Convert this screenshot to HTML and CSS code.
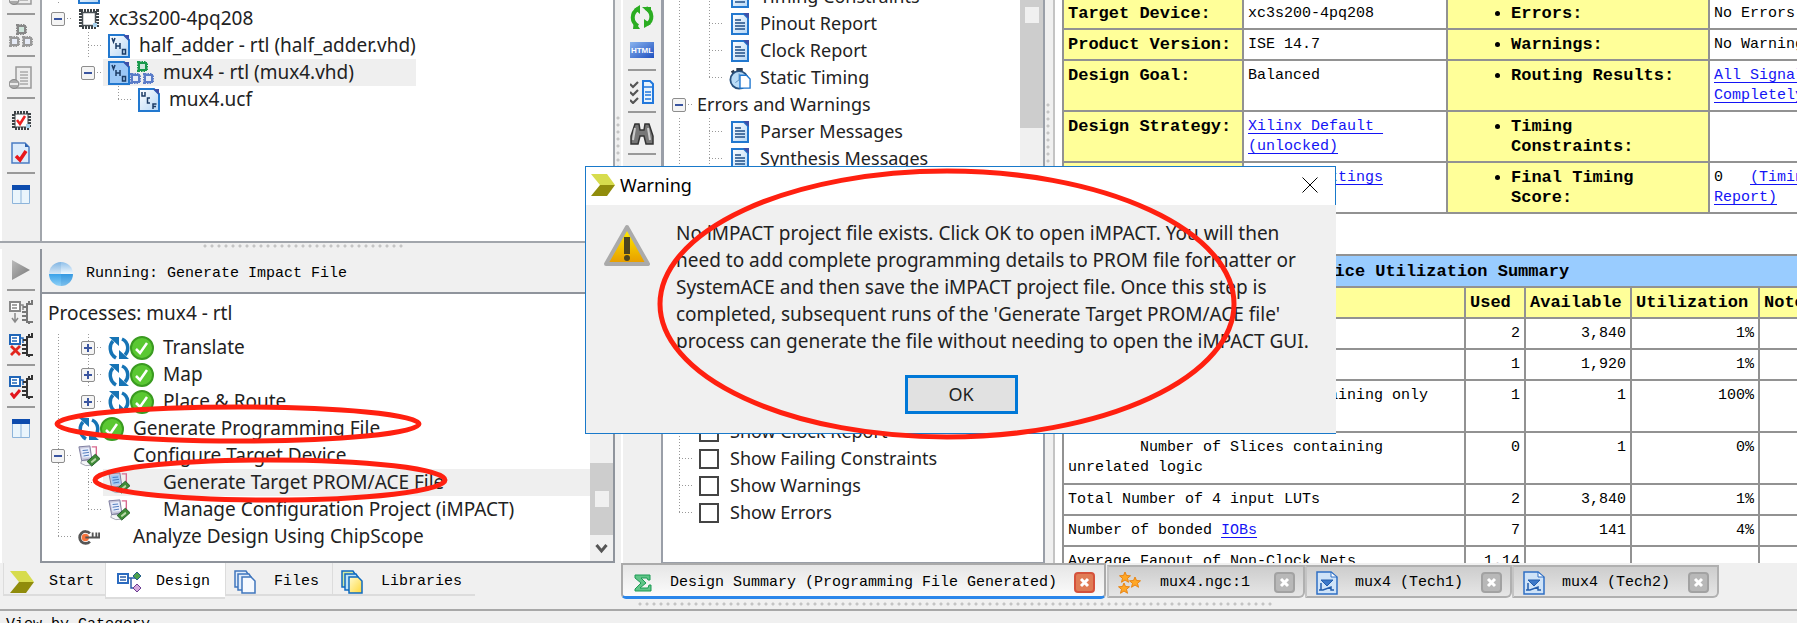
FILE: index.html
```html
<!DOCTYPE html>
<html lang="en">
<head>
<meta charset="utf-8">
<title>ISE Project Navigator</title>
<link rel="stylesheet" href="styles.css">
</head>
<body>
<svg class="defs" aria-hidden="true">
  <defs>
    <linearGradient id="blueDoc" x1="0" y1="0" x2="1" y2="1"><stop offset="0" stop-color="#fff"/><stop offset="1" stop-color="#b5d6f5"/></linearGradient>
    <linearGradient id="globe" x1="0" y1="0" x2="0" y2="1"><stop offset="0" stop-color="#8fc0ea"/><stop offset=".5" stop-color="#f2f9fe"/><stop offset=".52" stop-color="#3da4ea"/><stop offset="1" stop-color="#8fd0f6"/></linearGradient>
    <linearGradient id="warn" x1="0" y1="0" x2="0" y2="1"><stop offset="0" stop-color="#fff200"/><stop offset="1" stop-color="#e79a00"/></linearGradient>
    <linearGradient id="yellowDoc" x1="0" y1="0" x2="1" y2="1"><stop offset="0" stop-color="#fffbd0"/><stop offset="1" stop-color="#ffd83a"/></linearGradient>
    <linearGradient id="htmlBlue" x1="0" y1="0" x2="1" y2="1"><stop offset="0" stop-color="#8ab4ee"/><stop offset="1" stop-color="#1f50c0"/></linearGradient>
    <linearGradient id="playGray" x1="0" y1="0" x2="1" y2="1"><stop offset="0" stop-color="#bbb"/><stop offset="1" stop-color="#777"/></linearGradient>
    <symbol id="chip" viewBox="0 0 22 22"><rect x="3" y="3" width="16" height="16" fill="none" stroke="#3c4246" stroke-width="4" stroke-dasharray="2 1"/><rect x="4.500" y="4.500" width="13" height="13" fill="#fff" stroke="#4a5156" stroke-width="1.500"/><path d="M15 15h4v4h-4z" fill="#a9d3ee"/></symbol>
    <symbol id="page" viewBox="0 0 22 24"><path d="M1 1h15l5 5v17H1z" style="fill:var(--doc,url(#blueDoc))" stroke="#2278cf" stroke-width="2"/><path d="M15 1h6v6z" fill="#3d4fa8"/></symbol>
    <symbol id="vhd" viewBox="0 0 22 24"><use href="#page"/><path d="M4 4l1.500 4L7 4M8 9v6M12 9v6M8 12h4M14.500 15.500v4.500h3v-4.500z" fill="none" stroke="#1c3c66" stroke-width="1.500"/></symbol>
    <symbol id="ucf" viewBox="0 0 22 24"><use href="#page"/><path d="M4 4v4h3V4M12 10H9.500v5H12M15 21v-5h3.500M15 18.500h3" fill="none" stroke="#1c3c66" stroke-width="1.500"/></symbol>
    <symbol id="report" viewBox="0 0 22 24"><path d="M3 2h12l4 4v16H3z" fill="url(#blueDoc)" stroke="#2278cf" stroke-width="2"/><path d="M14 1h6v6z" fill="#3d4fa8"/><path d="M6 8h6M6 11h10M6 14h10M6 17h10" stroke="#1f4f86" stroke-width="1.500"/></symbol>
    <symbol id="blocks" viewBox="0 0 24 24"><g fill="none" stroke-width="4" stroke-dasharray="1.500 1"><rect x="9" y="2" width="7" height="7" stroke="var(--top,#17994a)"/><rect x="2" y="14" width="7" height="7" stroke="var(--low,#5a7cc8)"/><rect x="15" y="14" width="7" height="7" stroke="var(--low,#5a7cc8)"/></g><g fill="#cfe6dc" stroke-width="2"><rect x="9" y="2" width="7" height="7" stroke="var(--top,#17994a)"/><rect x="2" y="14" width="7" height="7" fill="#e6ebf7" stroke="var(--low,#5a7cc8)"/><rect x="15" y="14" width="7" height="7" fill="#e6ebf7" stroke="var(--low,#5a7cc8)"/></g></symbol>
    <symbol id="cycle" viewBox="0 0 22 24"><path d="M8 22C1 18 1 9 5 5M14 3c7 3 7 12 3 16" fill="none" stroke="#1674b5" stroke-width="3.500"/><path d="M1 1h10v9zM21 23H11v-9z" fill="#1674b5"/></symbol>
    <symbol id="ok" viewBox="0 0 24 24"><circle cx="12" cy="12" r="11" fill="#5ac832" stroke="#3a9b20" stroke-width="2"/><path d="M6 13l4 4 7-10" fill="none" stroke="#fff" stroke-width="2.500"/></symbol>
    <symbol id="config" viewBox="0 0 24 24"><path d="M3 20q5 4 12 2l-1-5H4z" fill="#f5f5f8" stroke="#9fa1ad"/><path d="M1 2l12-1 2 14-11 2z" fill="#c9c9dd" stroke="#77779a"/><path d="M3 4l9-1 2 10-9 1z" style="fill:var(--doc,#e9eefc)"/><path d="M5 6l6-.5M5 9l7-1M6 12l6-1" stroke="#4472b8"/><path d="M15 2h5v10" fill="none" stroke="#d8688e" stroke-width="1.500"/><path d="M10 18l9-8 5 5-9 8z" fill="#3f8b37" stroke="#1d5a24"/><path d="M14 18l5-4 1 2-5 4z" fill="#b9d8a9"/></symbol>
    <symbol id="scope" viewBox="0 0 24 24"><path d="M13 8A6.500 6.500 0 1 0 13 17" fill="none" stroke="#555" stroke-width="3"/><circle cx="8" cy="12.500" r="4" fill="#f6733c"/><path d="M8 12.500h16M16 12V7M20 12V7M23 12V7" stroke="#555" stroke-width="2"/></symbol>
    <symbol id="timing" viewBox="0 0 24 24"><path d="M8 1h7v4H8zM2 5l3-2 2 3-3 2z" fill="#2e3c4f"/><circle cx="11" cy="14" r="9.500" fill="#b9dbf6" stroke="#28517f" stroke-width="2"/><path d="M11 7v7l-4 3" stroke="#5a8ab8" fill="none"/><path d="M12 9h7l4 4v10H12z" fill="#fff" stroke="#2278cf" stroke-width="1.500"/></symbol>
    <symbol id="graydoc" viewBox="0 0 24 24"><path d="M7 1h15v21H7z" fill="#ededed" stroke="#999" stroke-width="1.500"/><path d="M11 6h8M11 9h8M11 12h8M11 15h8M11 18h8" stroke="#888"/><ellipse cx="5" cy="18" rx="5" ry="4.500" fill="#aaa" stroke="#888"/><path d="M1 18h8" stroke="#fff" stroke-width="1.500"/></symbol>
    <symbol id="chipcheck" viewBox="0 0 24 24"><rect x="5" y="5" width="15" height="15" fill="none" stroke="#3c4246" stroke-width="4" stroke-dasharray="2 1"/><rect x="6" y="6" width="13" height="13" fill="#fff" stroke="#3c4246"/><path d="M8 12l3 4 5-8" fill="none" stroke="#e22" stroke-width="2.500"/><path d="M17 16h4v4h-4z" fill="#a9d3ee"/></symbol>
    <symbol id="doccheck" viewBox="0 0 24 24"><path d="M3 2h13l4 4v16H3z" fill="#dcebfb" stroke="#4a7cc4" stroke-width="1.500"/><path d="M16 2v4h4z" fill="#2b62b0"/><path d="M7 15l4 4 6-9" fill="none" stroke="#e8161c" stroke-width="3.500"/></symbol>
    <symbol id="layout" viewBox="0 0 24 24"><path d="M3.500 6v14.500h17V6M12 6v14" fill="#eaf5fc" stroke="#8db4da"/><path d="M3 2h18v5H3z" fill="#0d4cae"/></symbol>
    <symbol id="play" viewBox="0 0 24 24"><path d="M3 2l18 10L3 22z" fill="url(#playGray)"/></symbol>
    <symbol id="flow" viewBox="0 0 24 24"><path d="M1 2h10v9H1z" fill="#fff" stroke="var(--c,#888)" stroke-width="2"/><path d="M3 5h5M3 8h5M11 5h3v5" stroke="var(--c,#888)" stroke-width="1.500" fill="none"/><path d="M24 4h-6v18h6M18 7h-4M18 12h-5M18 16h-5M18 20h-5M20 4V1M23 4V0M20 22v2" fill="none" stroke="var(--d,#777)" stroke-width="2"/></symbol>
    <symbol id="arrowDown" viewBox="0 0 24 24"><path d="M6 13v9M3 18l3 4 3-4" fill="none" stroke="#888" stroke-width="1.500"/></symbol>
    <symbol id="cross" viewBox="0 0 24 24"><path d="M2 13l9 9M11 13l-9 9" stroke="#e2261d" stroke-width="2.800"/></symbol>
    <symbol id="tick" viewBox="0 0 24 24"><path d="M2 18l3 4 6-7" fill="none" stroke="#e2151d" stroke-width="3"/></symbol>
    <symbol id="refresh" viewBox="0 0 24 24"><path d="M8 21C1 17 1 8 8 4M16 3c7 4 7 13 1 16" fill="none" stroke="#2bad22" stroke-width="4"/><path d="M10 0v9L4 4zM4 15l6 9H3zM12 2h9v8zM14 14v9l7-4z" fill="#2bad22"/></symbol>
    <symbol id="checklist" viewBox="0 0 24 24"><path d="M0 4l3 3 5-5M0 12l3 3 5-5M0 20l3 3 5-5" fill="none" stroke="#555" stroke-width="2.200"/><path d="M13 1h7l3 3v19H13z" fill="#e8f3fd" stroke="#2278dc" stroke-width="2"/><path d="M13 7h10M15 12h6M15 15h6M15 19h6" stroke="#2278dc" stroke-width="1.500"/></symbol>
    <symbol id="binocular" viewBox="0 0 24 24"><path d="M5 2h4l1 6h4l1-6h4l4 12v8h-7l-2-8h-4l-2 8H1v-8z" fill="#777" stroke="#333" stroke-width="1.500"/><path d="M5 6l-2 12M18 6l2 12" stroke="#ccc" stroke-width="2"/></symbol>
    <symbol id="chevron" viewBox="0 0 24 22"><path d="M0 0h16l8 11H9z" fill="#d7dc4d"/><path d="M9 11h15l-8 11H0z" fill="#908c0c"/></symbol>
    <symbol id="design" viewBox="0 0 24 24"><path d="M1 4h10v9H1z" fill="#fff" stroke="#2b6bc0" stroke-width="2"/><path d="M3 7h6M3 10h6M11 8h7M14 8v10h4" fill="none" stroke="#2b5ea8" stroke-width="1.500"/><path d="M20 2l4 4-4 4-4-4z" fill="#4da14c" stroke="#24608a"/><path d="M20 14l4 4-4 4-4-4z" fill="#d5a9dd" stroke="#6a3c92"/></symbol>
    <symbol id="files" viewBox="0 0 22 24"><g stroke-width="1.500"><path d="M1 1h11l2 3v13H1z" fill="#e1ecfa" stroke="#3f75bd"/><path d="M4 4h11l2 3v13H4z" fill="#e1ecfa" stroke="#3f75bd"/><path d="M8 7h9l4 4v12H8z" fill="#f5f9ff" stroke="#3f75bd"/></g></symbol>
    <symbol id="libs" viewBox="0 0 22 24"><g stroke-width="1.500"><path d="M1 1h11l2 3v13H1z" fill="#d3e8a0" stroke="#0e6ac0"/><path d="M4 4h11l2 3v13H4z" fill="#bde3f5" stroke="#0e6ac0"/><path d="M8 7h9l4 4v12H8z" fill="url(#yellowDoc)" stroke="#0e6ac0"/></g></symbol>
    <symbol id="sigma" viewBox="0 0 24 24"><path d="M4 4h15v5h-2l-1-2h-6l5 5-6 5h8l1-3h2v6H4v-2l6-6-6-5z" fill="#5fc487" stroke="#1c9b55"/></symbol>
    <symbol id="stars" viewBox="0 0 24 24"><g fill="#ffa726" stroke="#e98412"><path id="s" d="M8 1l1.500 3.500 4 .3-3 2.500 1 4L8 9 4.500 11.300l1-4-3-2.500 4-.3z"/><use href="#s" x="10" y="5"/><use href="#s" x="-1" y="11"/></g></symbol>
    <symbol id="tech" viewBox="0 0 22 24"><path d="M1 1h14l6 5v17H1z" fill="#cfe3f8" stroke="#2f6fc4" stroke-width="1.500"/><path d="M15 1v5h6z" fill="#fff" stroke="#2f6fc4"/><path d="M5 9h12l-6 6z" fill="#3c78c8" stroke="#235dac"/><path d="M5 12v7M3 19h4l8-3v3h3" fill="none" stroke="#235dac" stroke-width="1.500"/></symbol>
  </defs>
</svg>

<div class="app">
  <main class="workspace">
    <section class="left">
      <div class="dock dock-top">
        <nav class="toolbar scrolled" aria-label="Hierarchy tools">
          <button aria-label="Add source"><svg><use href="#graydoc"/></svg></button><hr>
          <button aria-label="Modules"><svg class="dim"><use href="#blocks"/></svg></button><hr>
          <button aria-label="Collapse"><svg><use href="#graydoc"/></svg></button><hr>
          <button aria-label="Device check"><svg><use href="#chipcheck"/></svg></button>
          <button aria-label="File check"><svg><use href="#doccheck"/></svg></button><hr>
          <button aria-label="Layout"><svg><use href="#layout"/></svg></button>
        </nav>
        <div class="panel hierarchy">
          <div class="row"><i class="g v"></i><svg class="ic"><use href="#page"/></svg></div>
          <div class="row"><i class="g e"><button class="exp" aria-label="Collapse"></button></i><svg class="ic"><use href="#chip"/></svg><span>xc3s200-4pq208</span></div>
          <div class="row"><i class="g"></i><i class="g t"></i><svg class="ic"><use href="#vhd"/></svg><span>half_adder - rtl (half_adder.vhd)</span></div>
          <div class="row"><i class="g"></i><i class="g e"><button class="exp" aria-label="Collapse"></button></i><div class="sel short"><svg class="ic tint"><use href="#vhd"/></svg><svg class="ic2"><use href="#blocks"/></svg><span>mux4 - rtl (mux4.vhd)</span></div></div>
          <div class="row"><i class="g"></i><i class="g"></i><i class="g l"></i><svg class="ic"><use href="#ucf"/></svg><span>mux4.ucf</span></div>
        </div>
      </div>
      <div class="grip-h"></div>
      <div class="dock dock-bottom">
        <nav class="toolbar" aria-label="Process tools">
          <button aria-label="Run"><svg><use href="#play"/></svg></button><hr>
          <button aria-label="Implement"><svg><use href="#flow"/><use href="#arrowDown"/></svg></button>
          <button aria-label="Stop process"><svg class="blue"><use href="#flow"/><use href="#cross"/></svg></button><hr>
          <button aria-label="Check process"><svg class="blue"><use href="#flow"/><use href="#tick"/></svg></button><hr>
          <button aria-label="Layout"><svg><use href="#layout"/></svg></button>
        </nav>
        <div class="process">
          <div class="running"><svg class="globe" viewBox="0 0 24 24"><circle cx="12" cy="12" r="12" fill="url(#globe)"/><path d="M12 12h12a12 12 0 0 1-12 12z" fill="#1c67b4" fill-opacity=".15"/><path d="M12 0a12 12 0 0 0-12 12h12z" fill="#1c67b4" fill-opacity=".12"/></svg><span>Running: Generate Impact File</span></div>
          <div class="panel split">
            <div class="tree">
              <h2 class="caption">Processes: mux4 - rtl</h2>
              <div class="row"><i class="g v"></i><i class="g e v"><button class="exp plus" aria-label="Expand"></button></i><svg class="ic"><use href="#cycle"/></svg><svg class="ic2"><use href="#ok"/></svg><span>Translate</span></div>
              <div class="row"><i class="g v"></i><i class="g e v"><button class="exp plus" aria-label="Expand"></button></i><svg class="ic"><use href="#cycle"/></svg><svg class="ic2"><use href="#ok"/></svg><span>Map</span></div>
              <div class="row"><i class="g v"></i><i class="g e"><button class="exp plus" aria-label="Expand"></button></i><svg class="ic"><use href="#cycle"/></svg><svg class="ic2"><use href="#ok"/></svg><span>Place &amp; Route</span></div>
              <div class="row"><i class="g v"></i><svg class="ic"><use href="#cycle"/></svg><svg class="ic2"><use href="#ok"/></svg><span>Generate Programming File</span></div>
              <div class="row"><i class="g e v"><button class="exp" aria-label="Collapse"></button></i><svg class="ic"><use href="#config"/></svg><i class="ic2"></i><span>Configure Target Device</span></div>
              <div class="row"><i class="g v"></i><i class="g t"></i><div class="sel"><svg class="ic tint"><use href="#config"/></svg><i class="ic2"></i><span>Generate Target PROM/ACE File</span></div></div>
              <div class="row"><i class="g v"></i><i class="g l"></i><svg class="ic"><use href="#config"/></svg><i class="ic2"></i><span>Manage Configuration Project (iMPACT)</span></div>
              <div class="row"><i class="g l"></i><svg class="ic"><use href="#scope"/></svg><i class="ic2"></i><span>Analyze Design Using ChipScope</span></div>
            </div>
            <div class="scrollbar low"><div class="thumb"></div><svg viewBox="0 0 22 26"><path d="M6 10l5 6 5-6" fill="none" stroke="#555" stroke-width="3"/></svg></div>
          </div>
        </div>
      </div>
      <nav class="tabs-left">
        <button><svg class="ti"><use href="#chevron"/></svg>Start</button>
        <button class="on"><svg class="ti"><use href="#design"/></svg>Design</button>
        <button><svg class="ti"><use href="#files"/></svg>Files</button>
        <button><svg class="ti"><use href="#libs"/></svg>Libraries</button>
      </nav>
    </section>
    <div class="grip-v"></div>

    <section class="right">
      <div class="summary">
        <nav class="toolbar mid" aria-label="Report tools">
          <button aria-label="Refresh"><svg><use href="#refresh"/></svg></button>
          <button aria-label="HTML"><svg viewBox="0 0 24 24"><rect y="4" width="24" height="16" fill="url(#htmlBlue)"/><text x="12" y="15" class="html-mark">HTML</text></svg></button><hr>
          <button aria-label="Options"><svg><use href="#checklist"/></svg></button><hr>
          <button aria-label="Find"><svg><use href="#binocular"/></svg></button><hr>
        </nav>
        <div class="contents">
          <div class="panel split reports">
            <div class="tree">
              <div class="row"><i class="g v"></i><i class="g t"></i><svg class="ic"><use href="#report"/></svg><span>Timing Constraints</span></div>
              <div class="row"><i class="g v"></i><i class="g t"></i><svg class="ic"><use href="#report"/></svg><span>Pinout Report</span></div>
              <div class="row"><i class="g v"></i><i class="g t"></i><svg class="ic"><use href="#report"/></svg><span>Clock Report</span></div>
              <div class="row"><i class="g v"></i><i class="g l"></i><svg class="ic"><use href="#timing"/></svg><span>Static Timing</span></div>
              <div class="row"><i class="g e"><button class="exp" aria-label="Collapse"></button></i><span class="near">Errors and Warnings</span></div>
              <div class="row"><i class="g v"></i><i class="g t"></i><svg class="ic"><use href="#report"/></svg><span>Parser Messages</span></div>
              <div class="row"><i class="g v"></i><i class="g t"></i><svg class="ic"><use href="#report"/></svg><span>Synthesis Messages</span></div>
            </div>
            <div class="scrollbar top"><div class="thumb"></div></div>
          </div>
          <div class="panel options">
            <label class="row"><i class="g t"></i><input type="checkbox"><span>Show Clock Report</span></label>
            <label class="row"><i class="g t"></i><input type="checkbox"><span>Show Failing Constraints</span></label>
            <label class="row"><i class="g t"></i><input type="checkbox"><span>Show Warnings</span></label>
            <label class="row"><i class="g l"></i><input type="checkbox"><span>Show Errors</span></label>
          </div>
        </div>
        <div class="grip-v inner"></div>
        <article class="report">
          <table class="status">
            <colgroup><col class="c1"><col class="c2"><col class="c3"><col class="c4"></colgroup>
            <tr><th>Target Device:</th><td>xc3s200-4pq208</td><th><ul><li>Errors:</li></ul></th><td>No Errors</td></tr>
            <tr><th>Product Version:</th><td>ISE 14.7</td><th><ul><li>Warnings:</li></ul></th><td>No Warnings</td></tr>
            <tr><th>Design Goal:</th><td>Balanced</td><th><ul><li>Routing Results:</li></ul></th><td><a href="#signals">All Signals<br>Completely Routed</a></td></tr>
            <tr><th>Design Strategy:</th><td><a href="#strategy">Xilinx Default&nbsp;<br>(unlocked)</a></td><th><ul><li>Timing<br>Constraints:</li></ul></th><td></td></tr>
            <tr><th>Environment:</th><td><a href="#settings">System Settings</a></td><th><ul><li>Final Timing<br>Score:</li></ul></th><td>0 &nbsp;&nbsp;<a href="#timing-report">(Timing<br>Report)</a></td></tr>
          </table>
          <table class="usage">
            <colgroup><col class="u1"><col class="u2"><col class="u3"><col class="u4"><col class="u5"></colgroup>
            <tr><th colspan="5" class="title">Device Utilization Summary</th></tr>
            <tr class="head"><th>Logic Utilization</th><th>Used</th><th>Available</th><th>Utilization</th><th>Note(s)</th></tr>
            <tr><td>Number of Slices</td><td>2</td><td>3,840</td><td>1%</td><td></td></tr>
            <tr><td>Number of occupied Slices</td><td>1</td><td>1,920</td><td>1%</td><td></td></tr>
            <tr class="double"><td><span class="sub">Number of Slices containing only</span> related logic</td><td>1</td><td>1</td><td>100%</td><td></td></tr>
            <tr class="double"><td><span class="sub">Number of Slices containing</span> unrelated logic</td><td>0</td><td>1</td><td>0%</td><td></td></tr>
            <tr><td>Total Number of 4 input LUTs</td><td>2</td><td>3,840</td><td>1%</td><td></td></tr>
            <tr><td>Number of bonded <a href="#iobs">IOBs</a></td><td>7</td><td>141</td><td>4%</td><td></td></tr>
            <tr><td>Average Fanout of Non-Clock Nets</td><td>1.14</td><td></td><td></td><td></td></tr>
          </table>
        </article>
      </div>
      <div class="tabs-right">
        <div class="tab on"><svg class="sg"><use href="#sigma"/></svg><span>Design Summary (Programming File Generated)</span><button class="x" aria-label="Close"><svg viewBox="0 0 17 17"><path d="M5 5l7 7M12 5l-7 7"/></svg></button></div>
        <div class="tab"><svg class="sg"><use href="#stars"/></svg><span>mux4.ngc:1</span><button class="x" aria-label="Close"><svg viewBox="0 0 17 17"><path d="M5 5l7 7M12 5l-7 7"/></svg></button></div>
        <div class="tab tech"><svg class="sg"><use href="#tech"/></svg><span>mux4 (Tech1)</span><button class="x" aria-label="Close"><svg viewBox="0 0 17 17"><path d="M5 5l7 7M12 5l-7 7"/></svg></button></div>
        <div class="tab tech"><svg class="sg"><use href="#tech"/></svg><span>mux4 (Tech2)</span><button class="x" aria-label="Close"><svg viewBox="0 0 17 17"><path d="M5 5l7 7M12 5l-7 7"/></svg></button></div>
      </div>
      <div class="grip-h wide"></div>
    </section>
  </main>
  <footer class="category">View by Category</footer>
</div>

<div class="dialog" role="dialog" aria-labelledby="dlg-title">
  <header><svg class="logo"><use href="#chevron"/></svg><span id="dlg-title">Warning</span><button class="close" aria-label="Close"><svg viewBox="0 0 16 16"><path d="M.5.5l15 15M15.500.5l-15 15"/></svg></button></header>
  <div class="body">
    <svg class="alert" viewBox="0 0 48 44"><path d="M24 3L45 40H3z" fill="url(#warn)" stroke="#aaa" stroke-width="4" stroke-linejoin="round"/><path d="M21 13h6v17h-6z" fill="#4b4420"/><circle cx="24" cy="34" r="3" fill="#4b4420"/></svg>
    <p>No iMPACT project file exists. Click OK to open iMPACT. You will then<br>need to add complete programming details to PROM file formatter or<br>SystemACE and then save the iMPACT project file. Once this step is<br>completed, subsequent runs of the 'Generate Target PROM/ACE file'<br>process can generate the file without needing to open the iMPACT GUI.</p>
  </div>
  <button class="confirm">OK</button>
</div>

<svg class="marks" viewBox="0 0 1797 623" aria-hidden="true">
  <ellipse cx="947" cy="304" rx="287" ry="133" stroke-width="5"/>
  <ellipse cx="238" cy="424" rx="181" ry="17" stroke-width="5"/>
  <ellipse cx="270" cy="480" rx="175" ry="20" stroke-width="5"/>
</svg>
</body>
</html>
```
FILE: styles.css
```css
* { box-sizing: border-box; }

body {
  margin: 0;
  background: #f0f0f0;
  color: #222;
  font: 19px/27px "Noto Sans", sans-serif;
  overflow: hidden;
}

button { font: inherit; color: inherit; padding: 0; border: 0; background: none; }
svg { display: block; flex: none; }
a { color: #1414f5; text-underline-offset: 3px; }
.defs { position: absolute; width: 0; height: 0; }

.app { height: 100vh; display: flex; flex-direction: column; }
.workspace { flex: 1; min-height: 0; display: flex; }
.left { flex: 0 0 615px; display: flex; flex-direction: column; }
.right { flex: 1; min-width: 0; display: flex; flex-direction: column; }

/* docks */
.dock { display: flex; min-height: 0; }
.dock-top { flex: 0 0 243px; overflow: hidden; border-bottom: 2px solid #a2a6ac; }
.dock-bottom { flex: 1; }
.panel { flex: 1; min-width: 0; background: #fff; }
.hierarchy { border: solid #a2a6ac; border-width: 0 2px 0 2px; padding-left: 1px; }
.hierarchy .row:first-child { margin-top: -22px; }
.process { flex: 1; display: flex; flex-direction: column; min-width: 0; border: solid #8f949c; border-width: 0 2px 2px; }
.running { flex: none; height: 45px; display: flex; align-items: center; gap: 13px; padding: 6px 0 0 7px; background: #f0f0f0; border-bottom: 2px solid #8f949c; font: 15px/20px "Liberation Mono", monospace; color: #000; }
.globe { width: 24px; height: 24px; }
.split { display: flex; min-height: 0; }
.tree { flex: 1; min-width: 0; padding-left: 1px; overflow: hidden; }
.caption { margin: 6px 0 7px 5px; font: inherit; }

/* toolbars */
.toolbar { flex: 0 0 40px; display: flex; flex-direction: column; align-items: center; padding: 9px 0 0; border-left: 2px solid #fff; }
.toolbar.scrolled { padding-top: 0; }
.toolbar.scrolled button:first-child { margin-top: -18px; }
.toolbar.mid { padding-top: 5px; }
.toolbar button, .toolbar svg { width: 24px; height: 24px; flex: none; }
.toolbar button + button { margin-top: 9px; }
.toolbar hr { width: 28px; height: 2px; margin: 7px 0 9px; border: 0; background: #999; flex: none; }
.dim { --top: #888; --low: #999; }
.blue { --c: #2166b8; --d: #333; }
.html-mark { font: bold 8px "Liberation Sans", sans-serif; fill: #fff; text-anchor: middle; }

/* tree rows */
.row { display: flex; align-items: center; height: 27px; white-space: nowrap; }
.row span { margin-left: 9px; }
.row .near { margin-left: 3px; }
.ic { width: 22px; height: 24px; margin-left: 5px; }
.ic2 { width: 24px; height: 24px; flex: none; }
.ic2 + span { margin-left: 9px; }
.tint { --doc: #9cc8f7; }
.sel { flex: 1; display: flex; align-items: center; height: 27px; background: #efefef; }
.sel.short { flex: none; padding-right: 62px; }
.g {
  --v: repeating-linear-gradient(#999 0 1px, transparent 1px 3px);
  --h: repeating-linear-gradient(90deg, #999 0 1px, transparent 1px 3px);
  flex: 0 0 30px; height: 27px; background-repeat: no-repeat;
}
.g.v { background-image: var(--v); background-size: 1px 100%; background-position: 15px 0; }
.g.t { background-image: var(--v), var(--h); background-size: 1px 100%, 14px 1px; background-position: 15px 0, 15px 13px; }
.g.l { background-image: var(--v), var(--h); background-size: 1px 14px, 14px 1px; background-position: 15px 0, 15px 13px; }
.g.e { display: flex; align-items: center; justify-content: center; background-image: var(--h); background-size: 14px 1px; background-position: 15px 13px; }
.g.e.v { background-image: var(--v), var(--h); background-size: 1px 100%, 14px 1px; background-position: 15px 0, 15px 13px; }
.exp { width: 14px; height: 14px; border: 1px solid #8d8d8d; border-radius: 2px; background: linear-gradient(#3a55a0, #3a55a0) center / 8px 2px no-repeat, #f4f4f4; }
.exp.plus { background: linear-gradient(#3a55a0, #3a55a0) center / 8px 2px no-repeat, linear-gradient(#3a55a0, #3a55a0) center / 2px 8px no-repeat, #f4f4f4; }

/* scrollbars */
.scrollbar { flex: 0 0 23px; display: flex; flex-direction: column; background: #f0f0f0; }
.thumb { display: flex; height: 72px; background: #cdcdcd; }
.thumb::after { content: ""; width: 14px; height: 16px; margin: auto; background: #f0f0f0; }
.scrollbar.low { justify-content: flex-end; }
.scrollbar.low svg { height: 26px; }
.scrollbar.top .thumb { height: 128px; }
.scrollbar.top .thumb::after { margin: 7px auto; }

/* splitters */
.grip-h { flex: 0 0 6px; background: radial-gradient(circle at 2px 3px, #c4c4c4 1px, transparent 2px) 203px 0 / 7px 6px repeat-x content-box; padding-right: 210px; }
.left .grip-h { background-clip: content-box; margin-left: 203px; margin-right: 0; background-position: 0 0; }
.grip-h.wide { flex-basis: 9px; margin-left: 17px; padding-right: 525px; background-position: 0 1px; }
.grip-v { flex: 0 0 6px; background: radial-gradient(circle at 3px 3px, #c4c4c4 1px, transparent 2px) 0 0 / 6px 7px repeat-y content-box; padding: 115px 0 200px; }
.grip-v.inner { flex-basis: 8px; padding: 102px 0 180px; }

/* left tabs */
.tabs-left { flex: 0 0 46px; display: flex; align-items: flex-start; padding-left: 3px; font: 15px/20px "Liberation Mono", monospace; color: #000; }
.tabs-left button { display: flex; align-items: center; gap: 15px; height: 33px; padding: 6px 11px 0 6px; border: solid #dcdcdc; border-width: 0 0 2px 1px; }
.tabs-left .on { height: 36px; padding: 4px 15px 0 11px; background: #fff; }
.tabs-left button:nth-child(n+3) { padding: 6px 13px 0 7px; gap: 17px; }
.ti { width: 24px; height: 24px; }

/* summary page */
.summary { flex: 1; min-height: 0; display: flex; }
.contents { flex: 0 0 384px; display: flex; flex-direction: column; border: solid #9a9fa8; border-width: 0 2px 1px 3px; font-size: 18px; }
.contents .tree, .options { margin-left: -1px; }
.reports { flex: 1; overflow: hidden; }
.reports .row:first-child { margin-top: -17px; }
.options { flex: none; padding: 20px 0 36px 1px; }
.options input { appearance: none; width: 20px; height: 20px; margin: 0 0 0 5px; border: 2px solid #444; background: #fff; }
.options span { margin-left: 11px; }
.report { flex: 1; min-width: 0; overflow: hidden; background: #fff; border-left: 2px solid #c4c4c4; padding-left: 7px; font: 15px/20px "Liberation Mono", monospace; color: #000; }
.report table { border-collapse: collapse; table-layout: fixed; }
.report td, .report th { border: 2px solid #929292; padding: 5px 4px 4px; text-align: left; vertical-align: top; white-space: nowrap; }
.report th { background: #ffff99; font-size: 17px; }
.report ul { margin: 0; padding-left: 59px; }
.status { width: 827px; margin-top: -3px; }
.c1 { width: 180px; } .c2 { width: 204px; } .c3 { width: 262px; }
.usage { width: 787px; margin-top: 40px; }
.u1 { width: 402px; } .u2 { width: 60px; } .u3 { width: 106px; } .u4 { width: 128px; }
.report .usage th.title { background: #99ccff; padding: 6px 38px 4px 0; text-align: center; }
.usage td + td { text-align: right; }
.report .usage .double td { padding-bottom: 5px; }
.report .usage td { white-space: normal; }
.sub { padding-left: 72px; white-space: nowrap; }

/* document tabs */
.tabs-right { flex: 0 0 37px; display: flex; align-items: flex-start; font: 15px/20px "Liberation Mono", monospace; color: #000; }
.tab { display: flex; align-items: center; width: 198px; height: 33px; margin: 2px 0 0 1px; padding: 2px 8px 0; background: linear-gradient(#cdcdcd, #e6e6e6); border: 2px solid #b0b0b0; border-left-color: #c4c4c4; border-radius: 0 0 6px; }
.tab span { flex: 1; margin-left: 19px; white-space: nowrap; }
.tab.tech { width: 207px; margin-left: 0; }
.tab.tech span { margin-left: 16px; }
.tab.on { width: 485px; height: 36px; margin: 0; background: linear-gradient(#e6e6e6, #fbfbfb); border: 2px solid #aaa; border-bottom: 3px solid #2a86ea; border-radius: 0 0 5px 5px; padding: 4px 9px 0 8px; }
.tab.on span { margin-left: 15px; }
.sg { width: 24px; height: 24px; }
.x { width: 21px; height: 21px; border: 2px solid #a2a2a2; border-radius: 4px; background: #b8b8b8; }
.x path { stroke: #fff; stroke-width: 3; }
.tab.on .x { border-color: #d5523c; background: #e07c56; }

.category { flex: 0 0 14px; overflow: hidden; padding: 4px 6px 0; border-top: 2px solid #a8a8a8; font: 15px/20px "Liberation Mono", monospace; color: #000; }

/* dialog */
.dialog { position: absolute; left: 585px; top: 166px; width: 751px; display: flex; flex-direction: column; background: #f0f0f0; border: solid #1979ca; border-width: 1px 0 1px 1px; }
.dialog header { display: flex; align-items: center; height: 38px; padding: 0 17px 2px 5px; background: #fff; border-right: 1px solid #1979ca; color: #000; font-size: 18px; }
.logo { width: 24px; height: 22px; margin-right: 5px; }
.close { margin-left: auto; width: 16px; height: 16px; }
.close path { stroke: #000; stroke-width: 1; }
.body { display: flex; gap: 25px; padding: 15px 17px 0; }
.alert { width: 48px; height: 44px; margin-top: 4px; }
.body p { margin: 0; white-space: nowrap; }
.confirm { align-self: center; width: 113px; height: 39px; margin: 20px 0 19px; border: 3px solid #0078d7; background: #e1e1e1; font-size: 18px; }

.marks { position: absolute; left: 0; top: 0; width: 1797px; height: 623px; pointer-events: none; fill: none; stroke: #ff2010; }
```
